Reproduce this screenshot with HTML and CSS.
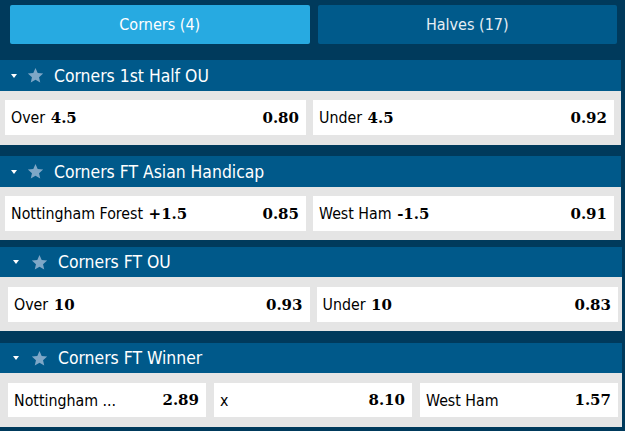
FILE: index.html
```html
<!DOCTYPE html>
<html>
<head>
<meta charset="utf-8">
<link rel="stylesheet" href="styles.css">
</head>
<body>
<div class="page">
  <div class="tabs">
    <div class="tab active">Corners (4)</div>
    <div class="tab">Halves (17)</div>
  </div>

  <section class="market m1">
    <div class="mhead">
      <span class="caret"></span>
      <svg class="star" viewBox="0 0 24 24"><path d="M12 1.5l3.1 7.1 7.7.7-5.8 5.1 1.7 7.6L12 18l-6.7 4 1.7-7.6-5.8-5.1 7.7-.7z"/></svg>
      <span class="title">Corners 1st Half OU</span>
    </div>
    <div class="mbody">
      <div class="sel"><span class="lbl">Over <b>4.5</b></span><span class="odd">0.80</span></div>
      <div class="sel"><span class="lbl">Under <b>4.5</b></span><span class="odd">0.92</span></div>
    </div>
  </section>

  <section class="market m2">
    <div class="mhead">
      <span class="caret"></span>
      <svg class="star" viewBox="0 0 24 24"><path d="M12 1.5l3.1 7.1 7.7.7-5.8 5.1 1.7 7.6L12 18l-6.7 4 1.7-7.6-5.8-5.1 7.7-.7z"/></svg>
      <span class="title">Corners FT Asian Handicap</span>
    </div>
    <div class="mbody">
      <div class="sel"><span class="lbl">Nottingham Forest <b>+1.5</b></span><span class="odd">0.85</span></div>
      <div class="sel"><span class="lbl">West Ham <b>-1.5</b></span><span class="odd">0.91</span></div>
    </div>
  </section>

  <section class="market m3">
    <div class="mhead">
      <span class="caret"></span>
      <svg class="star" viewBox="0 0 24 24"><path d="M12 1.5l3.1 7.1 7.7.7-5.8 5.1 1.7 7.6L12 18l-6.7 4 1.7-7.6-5.8-5.1 7.7-.7z"/></svg>
      <span class="title">Corners FT OU</span>
    </div>
    <div class="mbody">
      <div class="sel"><span class="lbl">Over <b>10</b></span><span class="odd">0.93</span></div>
      <div class="sel"><span class="lbl">Under <b>10</b></span><span class="odd">0.83</span></div>
    </div>
  </section>

  <section class="market m4">
    <div class="mhead">
      <span class="caret"></span>
      <svg class="star" viewBox="0 0 24 24"><path d="M12 1.5l3.1 7.1 7.7.7-5.8 5.1 1.7 7.6L12 18l-6.7 4 1.7-7.6-5.8-5.1 7.7-.7z"/></svg>
      <span class="title">Corners FT Winner</span>
    </div>
    <div class="mbody">
      <div class="sel"><span class="lbl">Nottingham ...</span><span class="odd">2.89</span></div>
      <div class="sel"><span class="lbl">x</span><span class="odd">8.10</span></div>
      <div class="sel"><span class="lbl">West Ham</span><span class="odd">1.57</span></div>
    </div>
  </section>
</div>
</body>
</html>
```

FILE: styles.css
```css
html, body {
  margin: 0;
  padding: 0;
}
body {
  background: #003a5c;
  font-family: "DejaVu Sans", "Roboto", sans-serif;
  font-stretch: condensed;
  width: 625px;
  height: 431px;
  overflow: hidden;
}
.page {
  display: flex;
  flex-direction: column;
}
.tabs {
  display: flex;
  gap: 8px;
  padding: 5px 8px 0 10px;
  margin-bottom: 16px;
}
.tab {
  flex: 1;
  height: 39px;
  display: flex;
  align-items: center;
  justify-content: center;
  background: #005a8b;
  color: #e6eef4;
  font-size: 16px;
  border-radius: 2px;
}
.tab.active {
  background: #27aae1;
  color: #ffffff;
}
.market {
  width: 621px;
}
.mhead {
  height: 31px;
  background: #00598a;
  display: flex;
  align-items: center;
  padding-left: 11px;
  color: #ffffff;
}
.caret {
  width: 0;
  height: 0;
  border-left: 3.5px solid transparent;
  border-right: 3.5px solid transparent;
  border-top: 4px solid #ffffff;
  margin-right: 10px;
}
.star {
  width: 17px;
  height: 17px;
  fill: #7ea7c7;
  margin-right: 10px;
}
.title {
  font-size: 17.4px;
}
.mbody {
  background: #e5e5e5;
  display: flex;
  gap: 7px;
  padding: 9px 7px 10px 5px;
}
.sel {
  flex: 1;
  height: 35px;
  background: #ffffff;
  display: flex;
  align-items: center;
  justify-content: space-between;
  padding: 0 7px 0 6px;
  color: #000000;
  font-size: 15.8px;
  white-space: nowrap;
  min-width: 0;
}
.sel b, .odd {
  font-family: "DejaVu Serif", "Liberation Serif", serif;
  font-weight: bold;
  font-size: 15px;
  font-stretch: normal;
}
.sel b {
  margin-left: 1px;
}
.m2 {
  margin-top: 11px;
}
.m2 .mbody {
  padding: 9px 7px 9px 5px;
}
.m3 {
  margin-top: 7px;
  width: 622px;
}
.m4 {
  margin-top: 12px;
  width: 622px;
}
.m3 .mhead, .m4 .mhead {
  height: 30px;
  padding-left: 13px;
}
.m3 .caret, .m4 .caret {
  margin-right: 12px;
}
.m3 .mbody {
  padding: 10px 4px 9px 8px;
}
.m4 .mbody {
  padding: 10px 4px 10px 8px;
  gap: 8px;
}
.m4 .sel {
  height: 34px;
}
```
